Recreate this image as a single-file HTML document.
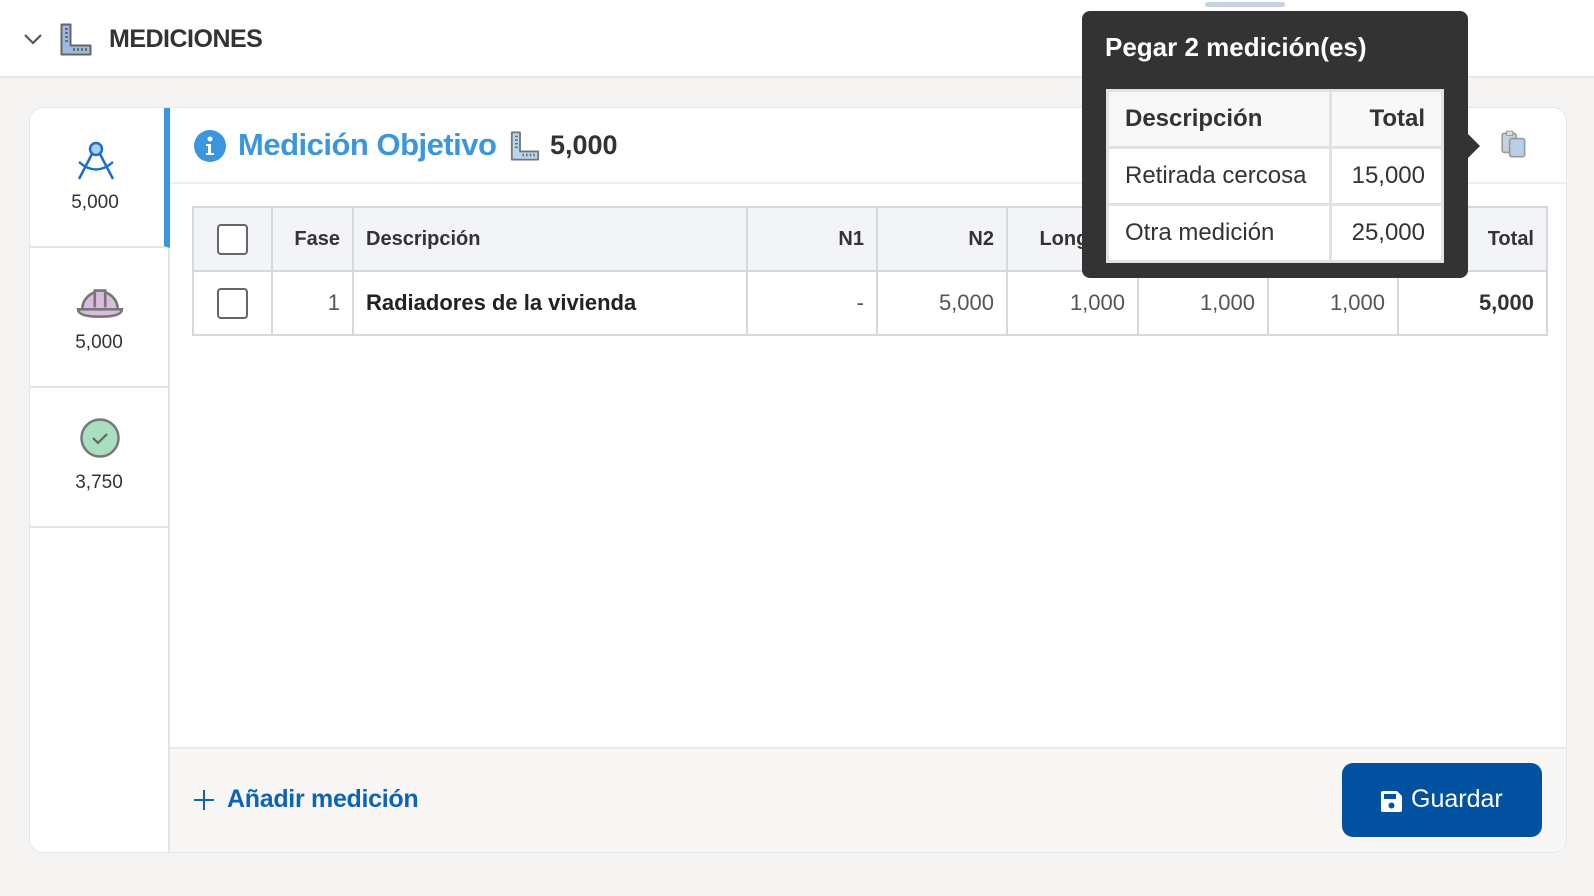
<!DOCTYPE html>
<html><head><meta charset="utf-8"><style>
*{box-sizing:border-box;margin:0;padding:0}
body{width:1594px;height:896px;background:#f5f4f2;font-family:"Liberation Sans",sans-serif;color:#333;position:relative;overflow:hidden}
.abs{position:absolute}
.hdr{left:0;top:0;width:1594px;height:78px;background:#fff;border-bottom:2px solid #e9e9e9}
.card{left:29px;top:107px;width:1538px;height:746px;background:#fff;border:1px solid #e6e6e6;border-radius:14px;overflow:hidden}
.side{left:0;top:0;width:140px;height:746px;border-right:2px solid #e2e4e8}
.item{position:absolute;left:0;width:138px;height:140px;border-bottom:2px solid #e2e4e8;text-align:center;font-size:19px}
table.t{position:absolute;left:162px;top:98px;border-collapse:collapse;font-size:22px}
table.t td{border:2px solid #d5d8de;height:64px;padding:0 12px;text-align:right;color:#555}
table.t tr.h td{background:#f2f4f8;color:#333;font-weight:bold;font-size:20px}
.cb{display:inline-block;width:31px;height:31px;border:2px solid #666;border-radius:4px;vertical-align:middle;background:#fff}
.foot{left:140px;top:639px;width:1398px;height:107px;background:#f8f7f5;border-top:2px solid #e9e9e9}
.btn{left:1342px;top:763px;width:200px;height:74px;background:#0252a1;border-radius:11px;color:#fff;font-size:25px}
.tip{left:1082px;top:11px;width:386px;height:267px;background:#333;border-radius:8px}
.tip table{position:absolute;left:24px;top:78px;border-collapse:collapse;background:#fff;font-size:24px}
.tip td{border:3px solid #e2e2e2;height:57px;padding:0 16px;color:#333}
</style></head><body>
<div class="abs hdr">
 <svg class="abs" style="left:23px;top:31px" width="20" height="16" viewBox="0 0 20 16"><path d="M2 4l8 8 8-8" fill="none" stroke="#555" stroke-width="2.2"/></svg>
 <svg class="abs" style="left:60px;top:23px" width="32" height="33" viewBox="0 0 32 33"><path d="M1.5 1.5h9v21h20v9h-29z" fill="#9dbbe0" stroke="#666" stroke-width="2" stroke-linejoin="round"/><path d="M5 6h3M5 10h3M5 14h3M5 18h3M14 25v3M18 25v3M22 25v3M26 25v3" stroke="#555" stroke-width="1.5"/></svg>
 <div class="abs" style="left:109px;top:25px;font-size:25px;font-weight:bold;color:#333;letter-spacing:-0.5px">MEDICIONES</div>
</div>
<div class="abs" style="left:1205px;top:2px;width:80px;height:5px;border-radius:3px;background:#c8d3e0"></div>
<div class="abs card">
 <div class="abs side">
  <div class="item" style="top:0;border-right:6px solid #3a96dd;width:140px">
   <svg style="position:absolute;left:46px;top:32px" width="42" height="42" viewBox="0 0 42 42"><circle cx="20" cy="9" r="6" fill="#a7cdee" stroke="#1c6fc4" stroke-width="2.5"/><path d="M16 14L3 39M24 14l13 25M3 22q17 15 34 0" fill="none" stroke="#1c6fc4" stroke-width="2.5"/></svg>
   <div style="position:absolute;top:84px;width:100%;padding-right:4px">5,000</div>
  </div>
  <div class="item" style="top:140px">
   <svg style="position:absolute;left:46px;top:34px" width="48" height="38" viewBox="0 0 46 36"><path d="M6 26a17 17 0 0 1 34 0z" fill="#d8bde0" stroke="#777" stroke-width="2.5"/><path d="M18 24V8h10v16" fill="#d8bde0" stroke="#777" stroke-width="2.5"/><path d="M2 26h42q0 7-21 7T2 26z" fill="#d8bde0" stroke="#777" stroke-width="2.5"/></svg>
   <div style="position:absolute;top:84px;width:100%">5,000</div>
  </div>
  <div class="item" style="top:280px">
   <svg style="position:absolute;left:49px;top:29px" width="42" height="42" viewBox="0 0 42 42"><circle cx="21" cy="21" r="18.5" fill="#a8dfbf" stroke="#777" stroke-width="2.5"/><path d="M14 21l5 5 9-9" fill="none" stroke="#666" stroke-width="2.2"/></svg>
   <div style="position:absolute;top:84px;width:100%">3,750</div>
  </div>
 </div>
 <div class="abs" style="left:140px;top:0;width:1398px;height:76px;border-bottom:2px solid #eceef1"></div>
 <svg class="abs" style="left:163px;top:21px" width="34" height="34" viewBox="0 0 34 34"><circle cx="17" cy="17" r="16" fill="#3a96dd"/><circle cx="17" cy="10" r="2.5" fill="#fff"/><path d="M13 15h5v9h3v2h-8v-2h2v-7h-2z" fill="#fff"/></svg>
 <div class="abs" style="left:208px;top:19px;font-size:31px;font-weight:bold;color:#3a96dd;letter-spacing:-0.5px">Medición Objetivo</div>
 <svg class="abs" style="left:480px;top:23px" width="30" height="30" viewBox="0 0 32 33"><path d="M1.5 1.5h9v21h20v9h-29z" fill="#b5d5f0" stroke="#777" stroke-width="2" stroke-linejoin="round"/><path d="M5 6h3M5 10h3M5 14h3M5 18h3M14 25v3M18 25v3M22 25v3M26 25v3" stroke="#666" stroke-width="1.5"/></svg>
 <div class="abs" style="left:520px;top:22px;font-size:27px;font-weight:bold;color:#333">5,000</div>
 <svg class="abs" style="left:1469px;top:21px" width="32" height="32" viewBox="0 0 30 30"><rect x="3" y="4" width="13" height="18" rx="2" fill="#c8d0da" stroke="#999" stroke-width="1.5"/><rect x="10" y="9" width="14" height="17" rx="2" fill="#b8cfe8" stroke="#999" stroke-width="1.5"/><rect x="7" y="2" width="6" height="4" rx="1" fill="#ddd" stroke="#999"/></svg>
 <table class="t">
  <tr class="h"><td style="width:79px;text-align:center"><span class="cb"></span></td><td style="width:81px">Fase</td><td style="width:394px;text-align:left">Descripción</td><td style="width:130px">N1</td><td style="width:130px">N2</td><td style="width:131px">Longitud</td><td style="width:130px">Anchura</td><td style="width:130px">Altura</td><td style="width:149px">Total</td></tr>
  <tr><td style="text-align:center"><span class="cb"></span></td><td>1</td><td style="text-align:left;font-weight:bold;color:#222">Radiadores de la vivienda</td><td>-</td><td>5,000</td><td>1,000</td><td>1,000</td><td>1,000</td><td style="font-weight:bold;color:#333">5,000</td></tr>
 </table>
 <div class="abs foot">
  <svg class="abs" style="left:23px;top:40px" width="22" height="22" viewBox="0 0 22 22"><path d="M11 1v20M1 11h20" stroke="#0c64b8" stroke-width="2"/></svg>
  <div class="abs" style="left:57px;top:36px;font-size:25px;font-weight:bold;color:#0c64b8;letter-spacing:-0.3px">Añadir medición</div>
 </div>
</div>
<div class="abs btn">
 <svg class="abs" style="left:38px;top:27px" width="23" height="23" viewBox="0 0 23 23"><path d="M3 1h14l5 5v14a2 2 0 0 1-2 2H3a2 2 0 0 1-2-2V3a2 2 0 0 1 2-2z" fill="#fff"/><rect x="4" y="4" width="12" height="5" fill="#0252a1"/><circle cx="11.5" cy="15.5" r="3" fill="#0252a1"/></svg>
 <div class="abs" style="left:69px;top:22px">Guardar</div>
</div>
<div class="abs tip">
 <div class="abs" style="left:23px;top:21px;font-size:26px;font-weight:bold;color:#fff">Pegar 2 medición(es)</div>
 <table>
  <tr style="background:#f8f8f8;font-weight:bold"><td style="width:223px">Descripción</td><td style="width:112px;text-align:right">Total</td></tr>
  <tr><td>Retirada cercosa</td><td style="text-align:right">15,000</td></tr>
  <tr><td>Otra medición</td><td style="text-align:right">25,000</td></tr>
 </table>
</div>
<div class="abs" style="left:1468px;top:134px;width:0;height:0;border-top:12px solid transparent;border-bottom:12px solid transparent;border-left:12px solid #333"></div>
</body></html>
